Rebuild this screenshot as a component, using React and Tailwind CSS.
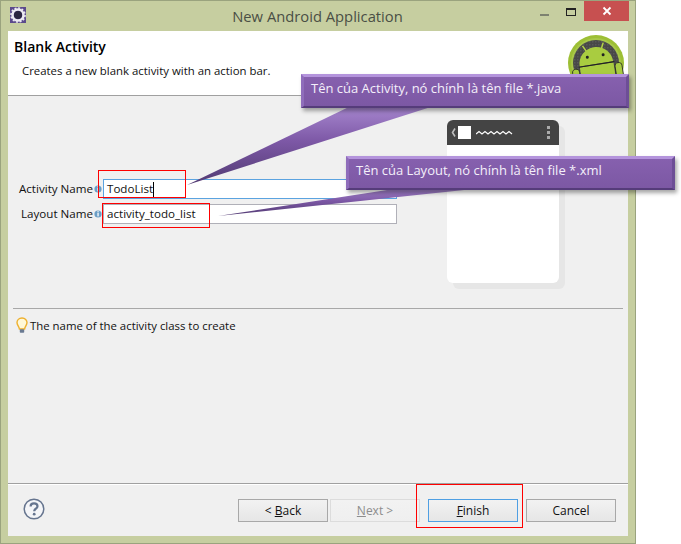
const font = { fontFamily: '"Open Sans","Noto Sans",sans-serif' };

function GearIcon() {
  return (
    <svg width="16" height="16" viewBox="0 0 16 16">
      <rect width="16" height="16" fill="#5b4a8c" />
      <circle cx="8" cy="8" r="5.5" fill="none" stroke="#eceaf2" strokeWidth="2.4" />
      <circle cx="8" cy="8" r="7" fill="none" stroke="#eceaf2" strokeWidth="1.6" strokeDasharray="2 1.65" />
      <circle cx="8" cy="8" r="4" fill="#2a2540" />
    </svg>
  );
}

function AndroidLogo() {
  return (
    <svg width="56" height="56" viewBox="0 0 56 56">
      <defs>
        <pattern id="mesh" width="3" height="3" patternUnits="userSpaceOnUse">
          <rect width="3" height="3" fill="#484848" />
          <rect width="1.5" height="1.5" fill="#585858" />
        </pattern>
      </defs>
      <circle cx="28" cy="28" r="28" fill="#9dbf35" />
      <circle cx="28" cy="28" r="25" fill="#a9c84a" />
      <circle cx="28" cy="28" r="23" fill="url(#mesh)" />
      <g transform="rotate(-9 28 26)">
        <path d="M17 9 L20 15 M38 9 L35 15" stroke="#b4d445" strokeWidth="1.5" />
        <path d="M11 29 C11 19 19 12 28 12 C37 12 45 19 45 29 Z" fill="#a9cc40" />
        <rect x="11" y="30" width="34" height="26" fill="#a9cc40" />
        <path d="M10 29.5 L46 29.5" stroke="#222" strokeWidth="1.2" />
        <circle cx="20" cy="21" r="1.5" fill="#222" />
        <circle cx="36" cy="21" r="1.5" fill="#222" />
        <rect x="3" y="31" width="7" height="22" rx="3.5" fill="#a9cc40" stroke="#222" strokeWidth="0.8" />
        <rect x="46" y="31" width="7" height="22" rx="3.5" fill="#a9cc40" stroke="#222" strokeWidth="0.8" />
      </g>
    </svg>
  );
}

function InfoDot() {
  return (
    <svg width="8" height="8" viewBox="0 0 8 8" className="mb-[1px] shrink-0">
      <circle cx="4" cy="4" r="3.6" fill="#6a9ec6" />
      <rect x="3.4" y="1.2" width="1.3" height="1.2" fill="#fff" />
      <rect x="3.4" y="3" width="1.3" height="3.4" fill="#fff" />
    </svg>
  );
}

function Bulb() {
  return (
    <svg width="12" height="17" viewBox="0 0 12 17" className="shrink-0">
      <path d="M6 1 C2.8 1 1 3.2 1 5.6 C1 8 3 9.4 3.4 12 L8.6 12 C9 9.4 11 8 11 5.6 C11 3.2 9.2 1 6 1 Z" fill="#fff8d8" stroke="#eeb02e" strokeWidth="1.4" />
      <rect x="3.8" y="12.2" width="4.4" height="3.6" rx="0.8" fill="#6a7a92" />
    </svg>
  );
}

function HelpIcon() {
  return (
    <svg width="22" height="22" viewBox="0 0 22 22">
      <circle cx="11" cy="11" r="9.8" fill="#f4f5f8" stroke="#66758f" strokeWidth="1.5" />
      <path d="M7.6 8.4 C7.6 6.4 9.2 5.4 11 5.4 C13 5.4 14.5 6.6 14.5 8.3 C14.5 10.6 11.2 10.7 11.2 13.2" fill="none" stroke="#66758f" strokeWidth="2.2" />
      <circle cx="11.2" cy="16.2" r="1.4" fill="#66758f" />
    </svg>
  );
}

function Btn({ children, className = "" }) {
  return (
    <div className={"w-[90px] h-[23px] border flex items-center justify-center text-[12px] bg-gradient-to-b from-[#f2f2f2] to-[#e6e6e6] " + className}>
      {children}
    </div>
  );
}

function Callout({ children, className = "" }) {
  return (
    <div className={"absolute h-[34px] border-t-[3px] border-l-[3px] border-r-[3px] border-b-[2px] border-t-[#b494dc] border-l-[#8f6dbb] border-r-[#6d4e96] border-b-[#553c7a] bg-gradient-to-b from-[#8660ae] to-[#7c58a4] text-[#f4effa] text-[13px] leading-[22px] pl-[7px] shadow-[2px_3px_4px_rgba(0,0,0,0.35)] " + className}>
      {children}
    </div>
  );
}

export default function App() {
  return (
    <div className="relative w-[681px] h-[544px] bg-white overflow-hidden" style={font}>
      <div className="w-[636px] h-[544px] bg-[#c6cea0] border border-[#9aa37e] flex flex-col">
        <div className="relative h-[30px] shrink-0 flex items-center justify-center text-[14.75px] text-[#4a4f45] pr-[1px]">
          <div className="absolute left-[9px] top-[6px] flex"><GearIcon /></div>
          New Android Application
          <div className="absolute left-[539px] top-[13px] w-[9px] h-[2px] bg-[#7d8270]" />
          <div className="absolute left-[565px] top-[7px] w-[10px] h-[8px] border border-t-2 border-[#222]" />
          <div className="absolute left-[583px] top-0 w-[45px] h-[20px] bg-[#c75050] flex items-center justify-center">
            <svg width="10" height="10" viewBox="0 0 10 10"><path d="M1.5 1.5 L8.5 8.5 M8.5 1.5 L1.5 8.5" stroke="#fff" strokeWidth="1.8" /></svg>
          </div>
        </div>
        <div className="mx-[7px] h-[505px] bg-[#f0f0f0] flex flex-col text-[11.4px] text-[#111]">
          <div className="relative h-[65px] shrink-0 bg-white border-b border-[#a0a0a0] overflow-hidden">
            <div className="pl-[6px] pt-[7px] text-[14px] leading-[18px] font-semibold text-black">Blank Activity</div>
            <div className="pl-[14px] pt-[7px] leading-[16px]">Creates a new blank activity with an action bar.</div>
            <div className="absolute left-[560px] top-[4px] flex"><AndroidLogo /></div>
          </div>
          <div className="h-[212px] shrink-0 flex items-start text-[11.6px]">
            <div className="w-[389px] shrink-0 pt-[83px] flex flex-col gap-[5px]">
              <div className="flex items-center h-[20px]">
                <div className="w-[85px] text-right">Activity Name</div>
                <div className="w-[10px] flex justify-center"><InfoDot /></div>
                <div className="w-[294px] h-[20px] bg-white border border-[#5ba3e0] pl-[3px] flex items-center">TodoList<span className="w-px h-[15px] bg-black" /></div>
              </div>
              <div className="flex items-center h-[20px]">
                <div className="w-[85px] text-right">Layout Name</div>
                <div className="w-[10px] flex justify-center"><InfoDot /></div>
                <div className="w-[294px] h-[20px] bg-white border border-[#b0b0b8] pl-[3px] flex items-center">activity_todo_list</div>
              </div>
            </div>
            <div className="ml-[50px] mt-[24px] w-[112px] h-[163px] rounded-[6px] bg-white shadow-[6px_6px_0_#e6e6e6] overflow-hidden">
              <div className="h-[25px] bg-[#444] flex items-center pl-[4px] pr-[9px]">
                <svg width="5" height="9" viewBox="0 0 5 9" className="mr-[2px]"><path d="M4 0.5 L1.5 4.5 L4 8.5" fill="none" stroke="#bbb" strokeWidth="1.6" /></svg>
                <span className="w-[13px] h-[13px] bg-white" />
                <svg width="38" height="6" viewBox="0 0 38 6" className="ml-[5px]"><path d="M0 4 L3 1.5 L6 4 L9 1.5 L12 4 L15 1.5 L18 4 L21 1.5 L24 4 L27 1.5 L30 4 L33 1.5 L36 4" fill="none" stroke="#fff" strokeWidth="1.2" /></svg>
                <span className="ml-auto flex flex-col gap-[2px]">
                  <span className="w-[3px] h-[3px] bg-[#aaa]" />
                  <span className="w-[3px] h-[3px] bg-[#aaa]" />
                  <span className="w-[3px] h-[3px] bg-[#aaa]" />
                </span>
              </div>
            </div>
          </div>
          <div className="mx-[5px] w-[610px] h-[2px] shrink-0 border-t border-[#a8a8a8]" />
          <div className="h-[173px] shrink-0 flex items-start pl-[8px] pt-[7px] gap-[2px] leading-[17px]">
            <Bulb />
            <span>The name of the activity class to create</span>
          </div>
          <div className="h-[2px] shrink-0 border-t border-[#a0a0a0] bg-white" />
          <div className="flex-1 flex items-start pt-[14px] pl-[15px]">
            <div className="mt-[-1px] flex"><HelpIcon /></div>
            <Btn className="ml-[193px] border-[#a8a8a8]"><span>&lt; <u>B</u>ack</span></Btn>
            <Btn className="ml-[2px] border-[#dcdcdc] text-[#8d8d8d] from-[#efefef] to-[#efefef]"><span><u>N</u>ext &gt;</span></Btn>
            <Btn className="ml-[8px] border-[#4f9fe3]"><span><u>F</u>inish</span></Btn>
            <Btn className="ml-[8px] border-[#a8a8a8]">Cancel</Btn>
          </div>
        </div>
      </div>

      <svg width="681" height="544" viewBox="0 0 681 544" className="absolute left-0 top-0 pointer-events-none">
        <defs>
          <linearGradient id="tail" x1="0" y1="0" x2="0" y2="1">
            <stop offset="0" stopColor="#a888d0" />
            <stop offset="0.45" stopColor="#7d58a6" />
            <stop offset="1" stopColor="#513a72" />
          </linearGradient>
        </defs>
        <polygon points="353,105 437,105 187,185" fill="url(#tail)" />
        <polygon points="400,188 483,188 218,216" fill="url(#tail)" />
      </svg>

      <Callout className="left-[301px] top-[74px] w-[328px]">Tên của Activity, nó chính là tên file *.java</Callout>
      <Callout className="left-[346px] top-[156px] w-[329px]">Tên của Layout, nó chính là tên file *.xml</Callout>

      <div className="absolute left-[98px] top-[170px] w-[88px] h-[28px] border border-[#ff0000]" />
      <div className="absolute left-[102px] top-[203px] w-[108px] h-[25px] border border-[#ff0000]" />
      <div className="absolute left-[416px] top-[484px] w-[107px] h-[44px] border border-[#ff0000]" />
    </div>
  );
}
